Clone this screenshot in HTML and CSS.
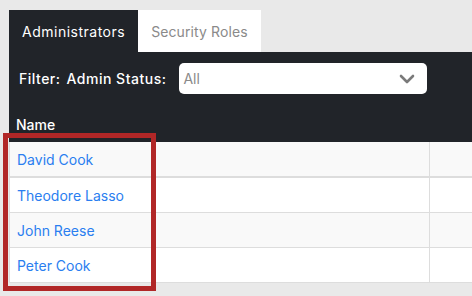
FILE: index.html
```html
<!DOCTYPE html>
<html lang="en">
<head>
    <meta charset="UTF-8">
    <title>Administrators</title>
    <link rel="stylesheet" href="styles.css">
</head>
<body>
    <div class="page">
        <div class="tabs">
            <div class="tab active">Administrators</div>
            <div class="tab">Security Roles</div>
        </div>
        <div class="panel">
            <div class="filters">
                <span class="filter-label">Filter:</span>
                <span class="filter-label">Admin Status:</span>
                <div class="select">
                    <span>All</span>
                    <svg class="chevron" width="16" height="10" viewBox="0 0 16 10">
                        <path d="M2 2 L8 8 L14 2" fill="none" stroke="#7a7a7a" stroke-width="2.6" stroke-linecap="round" stroke-linejoin="round"/>
                    </svg>
                </div>
            </div>
            <div class="col-head">Name</div>
        </div>
        <table class="list">
            <tr class="odd first"><td class="name"><a href="#">David Cook</a></td><td></td></tr>
            <tr><td class="name"><a href="#">Theodore Lasso</a></td><td></td></tr>
            <tr class="odd"><td class="name"><a href="#">John Reese</a></td><td></td></tr>
            <tr><td class="name"><a href="#">Peter Cook</a></td><td></td></tr>
        </table>
    </div>
    <div class="highlight"></div>
</body>
</html>
```

FILE: styles.css
```css
body {
    margin: 0;
    background-color: #e9e9e9;
    font-family: Inter, "Open Sans", sans-serif;
    font-size: 14px;
    overflow: hidden;
}

.page {
    padding: 10px 0 0 9px;
    width: 520px;
}

.tabs {
    display: flex;
    height: 42px;
}

.tab {
    padding: 0 13px;
    line-height: 44px;
    letter-spacing: 0.1px;
    background-color: #ffffff;
    color: #8a8a8a;
}

.tab.active {
    letter-spacing: 0.5px;
    background-color: #212429;
    color: #ffffff;
}

.panel {
    background-color: #212429;
    color: #ffffff;
}

.filters {
    display: flex;
    align-items: center;
    height: 53px;
    padding-left: 10px;
}

.filter-label {
    font-weight: 500;
    letter-spacing: 0.5px;
    margin-right: 6px;
}

.select {
    display: flex;
    align-items: center;
    justify-content: space-between;
    width: 248px;
    height: 31px;
    margin-left: 7px;
    padding: 0 12px 0 4px;
    box-sizing: border-box;
    background-color: #ffffff;
    border-radius: 5px;
    color: #8a8a8a;
}

.col-head {
    font-weight: 500;
    padding: 11px 7px 9px;
    line-height: 17px;
}

.list {
    border-collapse: collapse;
    width: 100%;
}

.list td {
    height: 34px;
    padding: 0 7px;
    border: 1px solid #dddddd;
    border-top: none;
    background-color: #ffffff;
}

.list tr.first td {
    border-bottom-width: 2px;
}

.list tr.odd td {
    background-color: #f9f9f9;
}

.list td.name {
    width: 405px;
}

.list a {
    color: #2a7ef0;
    text-decoration: none;
}

.highlight {
    position: absolute;
    left: 3px;
    top: 133px;
    width: 143px;
    height: 148px;
    border: 5px solid #b12727;
}
```
